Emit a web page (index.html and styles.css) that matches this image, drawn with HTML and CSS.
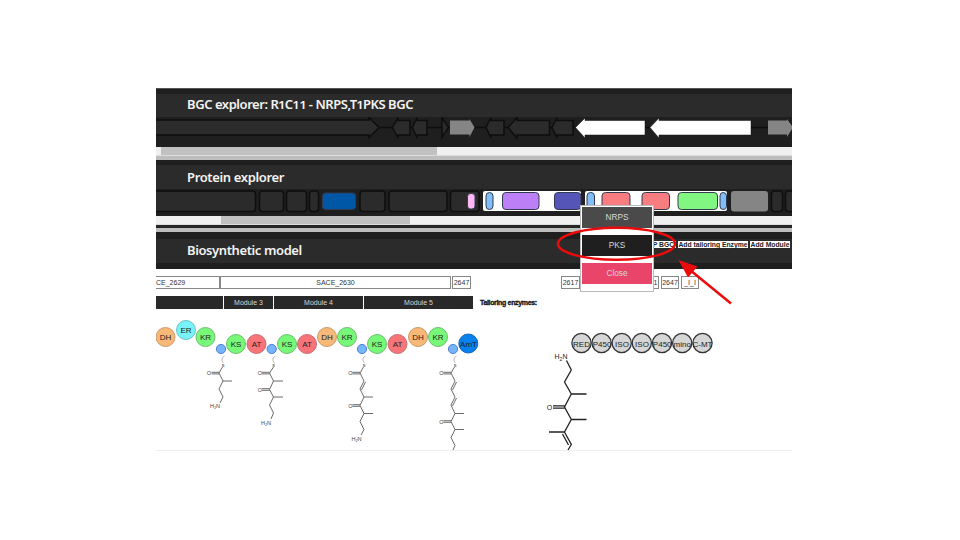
FILE: index.html
```
<!DOCTYPE html>
<html lang="en">
<head>
<meta charset="utf-8">
<title>Biosynthetic model</title>
<link rel="stylesheet" href="styles.css">
</head>
<body>
<main class="app">
  <section class="panel bgc">
    <header class="panel-head"><h2 class="t-bgc">BGC explorer: R<span class="old">1</span>C<span class="old">11</span> - NRPS,T<span class="old">1</span>PKS BGC</h2></header>
    <svg class="track" viewBox="156 117 636 30" width="636" height="30">
      <path class="axis" d="M156 127.500H792"/>
      <g class="gene">
        <path d="M150 120H369V117.500L379 127.500L369 137.500V135H150Z"/>
        <path d="M410 120.500V135H398V138L392.500 127.500L398 117.500V120.500Z"/>
        <path d="M427 120.500V135H417V138L412.500 127.500L417 117.500V120.500Z"/>
        <path d="M442 117.500L448.500 127.500L442 137.500Z"/>
        <path d="M504 120.500V135H491V138L486 127.500L491 117.500V120.500Z"/>
        <path d="M549.500 120.500V135H517V138L508 127.500L517 117.500V120.500Z"/>
        <path d="M573 120.500V135H557V138L552 127.500L557 117.500V120.500Z"/>
      </g>
      <path class="gray" d="M450 120.500H469.500V119L474.500 127.500L469.500 137V134.500H450Z"/>
      <path class="gray" d="M768 120.500H787V119L793 127.500L787 137V134.500H768Z"/>
      <path class="white" d="M645 120.500V135H585V138L575.500 127.500L585 118V120.500Z"/>
      <path class="white" d="M751 120.500V135H659V138L650 127.500L659 118V120.500Z"/>
    </svg>
    <div class="scroll"><i class="thumb thumb-a"></i></div>
  </section>
  <section class="panel protein">
    <header class="panel-head"><h2 class="t-protein">Protein explorer</h2></header>
    <svg class="track" viewBox="156 189 636 27" width="636" height="27">
      <g class="gene">
        <rect x="150" y="191" width="105.500" height="20.500" rx="3"/>
        <rect x="259.500" y="191" width="24" height="20.500" rx="3"/>
        <rect x="286.500" y="191" width="20" height="20.500" rx="3"/>
        <rect x="309.500" y="191" width="9" height="20.500" rx="3"/>
        <rect x="360" y="191" width="25" height="20.500" rx="3"/>
        <rect x="389" y="191" width="58" height="20.500" rx="3"/>
        <rect x="450.500" y="191" width="28.500" height="20.500" rx="3"/>
        <rect x="771.500" y="191" width="11" height="20.500" rx="3"/>
        <rect x="785.500" y="191" width="12" height="20.500" rx="3"/>
      </g>
      <rect x="483" y="191" width="98" height="20" rx="2" fill="#fff"/>
      <rect x="585" y="191" width="142" height="20" rx="2" fill="#fff"/>
      <rect x="731" y="191" width="37" height="20.500" rx="3" fill="#858585"/>
      <g class="domain">
        <rect x="322.500" y="193" width="33" height="16.500" rx="3" fill="#0057a6"/>
        <rect x="467.500" y="193.500" width="7.500" height="15.500" rx="3" fill="#ffb8f5"/>
        <rect x="486" y="192.500" width="7" height="17" rx="3.500" fill="#81bef7"/>
        <rect x="502.500" y="192.500" width="36.500" height="17" rx="3.500" fill="#bc7ff5"/>
        <rect x="554.500" y="192.500" width="26.500" height="17" rx="3.500" fill="#5555b7"/>
        <rect x="587" y="192.500" width="7.500" height="17" rx="3.500" fill="#81bef7"/>
        <rect x="602" y="192.500" width="28" height="17" rx="3.500" fill="#f77d80"/>
        <rect x="642" y="192.500" width="27.500" height="17" rx="3.500" fill="#f77d80"/>
        <rect x="678" y="192.500" width="39.500" height="17" rx="3.500" fill="#81f781"/>
        <rect x="720" y="192.500" width="6.500" height="17" rx="3.300" fill="#81bef7"/>
      </g>
    </svg>
    <div class="scroll"><i class="thumb thumb-b"></i></div>
    <div class="rule"></div>
  </section>
  <section class="panel model">
    <h2 class="t-model">Biosynthetic model</h2>
    <div class="actions"><button class="b-bgc">P BGC</button><button class="b-tail">Add tailoring Enzyme</button><button class="b-mod">Add Module</button></div>
  </section>
  <div class="genes">
    <span class="g-a">CE_2629</span><span class="g-b">SACE_2630</span><span class="g-c">2647</span><span class="g-d">2617</span><span class="g-e">1</span><span class="g-f">2647</span><span class="g-g">_I_I</span>
  </div>
  <div class="modules">
    <span class="m-a"></span><span class="m-b">Module 3</span><span class="m-c">Module 4</span><span class="m-d">Module 5</span><strong>Tailoring enzymes:</strong>
  </div>
  <svg class="canvas" viewBox="156 310 636 141" width="636" height="141">
    <g class="bubbles">
      <g fill="#f8b878" stroke="#c99a6b"><circle cx="165.500" cy="337" r="9.500"/><circle cx="327" cy="337" r="9.500"/><circle cx="418" cy="337" r="9.500"/></g>
      <circle cx="186" cy="330" r="9.500" fill="#78f4f8" stroke="#70bfc4"/>
      <g fill="#78f878" stroke="#6fbd70"><circle cx="205.500" cy="337" r="9.500"/><circle cx="236" cy="344" r="9.500"/><circle cx="287" cy="344" r="9.500"/><circle cx="347" cy="337" r="9.500"/><circle cx="377" cy="344" r="9.500"/><circle cx="438" cy="337" r="9.500"/></g>
      <g fill="#f77479" stroke="#c87075"><circle cx="256.500" cy="344" r="9.500"/><circle cx="307" cy="344" r="9.500"/><circle cx="397.500" cy="344" r="9.500"/></g>
      <circle cx="468.300" cy="343.500" r="9.500" fill="#0781ed" stroke="#1267b5"/>
      <g fill="#76b5fc" stroke="#4f7fd9"><circle cx="221" cy="349" r="4.600"/><circle cx="271.700" cy="349" r="4.600"/><circle cx="362" cy="349" r="4.600"/><circle cx="453" cy="349" r="4.600"/></g>
      <g class="tail"><circle cx="581.500" cy="343" r="9.600"/><circle cx="601.600" cy="343" r="9.600"/><circle cx="621.700" cy="343" r="9.600"/><circle cx="641.800" cy="343" r="9.600"/><circle cx="662" cy="343" r="9.600"/><circle cx="682.200" cy="343" r="9.600"/><circle cx="702.500" cy="343" r="9.600"/></g>
    </g>
    <g class="labels">
      <text x="165.500" y="340">DH</text><text x="186" y="333">ER</text><text x="205.500" y="340">KR</text>
      <text x="236" y="347">KS</text><text x="256.500" y="347">AT</text><text x="287" y="347">KS</text><text x="307" y="347">AT</text>
      <text x="327" y="340">DH</text><text x="347" y="340">KR</text><text x="377" y="347">KS</text><text x="397.500" y="347">AT</text>
      <text x="418" y="340">DH</text><text x="438" y="340">KR</text><text x="468.500" y="347">AmT</text>
      <text x="581.500" y="347">RED</text><text x="602" y="347">P450</text><text x="622" y="347">ISO</text><text x="642" y="347">ISO</text><text x="662.200" y="347">P450</text><text x="682.200" y="347">mino</text><text x="702.500" y="347">C-MT</text>
    </g>
    <g class="mol">
      <path class="link" d="M224.500 356L222 358V361L223.500 363M275.500 356L273 358V361L274.500 363M365.500 356L363 358V361L364.500 363M456.500 356L454 358V361L455.500 363"/>
      <path d="M222.500 367L219 373L223 381L219 389L223 397L220 403M211.500 372.300H219M211.500 373.900H219M223 381H232"/>
      <path d="M273.500 367L269.500 373L273.500 381L269.500 389.500L273.500 397L269.500 405L273.500 413L271 419M262 372.300H269.500M262 373.900H269.500M262 388.700H269.500M262 390.300H269.500M273.500 381H283M273.500 397H283"/>
      <path d="M363.500 367L360 373L364 381L360 389L364 397L360 405.500L364 413.500L360 421.500L364 429.500L361 435M352.500 372.300H360M352.500 373.900H360M352.500 404.700H360M352.500 406.300H360M364 397H373M364 413.500H373M365.500 382L361.500 390"/>
      <path d="M454.500 367L451 373L455 381L451 389L455 397L451 405L455 413.500L451 421.500L455 429.500L451 437.500L455 445.500L453 450M443.500 372.300H451M443.500 373.900H451M443.500 420.700H451M443.500 422.300H451M455 413.500H464M455 429.500H464M456.500 382L452.500 390M456.500 398L452.500 406"/>
      <path class="bold" d="M566.500 360.500L571.300 370L564.500 382L571.300 394L564.500 407L571.300 419.500L564.500 432L571.300 444.500L568 450M553 405.800H564.500M553 408.200H564.500M571.300 394H586.500M571.300 419.500H586.500M564.500 432H549M562.500 434L568.500 445"/>
      <g class="atoms">
        <text x="223" y="367">s</text><text x="273.500" y="367">s</text><text x="364" y="367">s</text><text x="455" y="367">s</text>
        <text x="209" y="375">O</text><text x="260" y="375">O</text><text x="260" y="391.500">O</text><text x="350.500" y="375">O</text><text x="350.500" y="407.500">O</text><text x="441.500" y="375">O</text><text x="441.500" y="423.500">O</text>
        <text x="215" y="408">H<tspan class="sub">2</tspan>N</text><text x="266" y="424.500">H<tspan class="sub">2</tspan>N</text><text x="356.500" y="440.500">H<tspan class="sub">2</tspan>N</text>
      </g>
      <g class="atoms-big"><text x="561" y="359">H<tspan class="sub-big">2</tspan>N</text><text x="549.500" y="409.500">O</text></g>
    </g>
    <path d="M156 451H792" stroke="#ddd"/>
  </svg>
  <div class="menu"><span class="nrps">NRPS</span><span class="pks">PKS</span><span class="close">Close</span></div>
  <svg class="note" viewBox="550 220 190 90" width="190" height="90">
    <ellipse cx="616.500" cy="243.800" rx="58.500" ry="16"/>
    <path d="M731 303.500L690 270"/>
    <path class="tip" d="M678.500 260L697.500 266.500L688 277.500Z"/>
  </svg>
</main>
</body>
</html>
```
FILE: styles.css
```
* { box-sizing: border-box; }
body { margin: 0; background: #fff; font-family: "Liberation Sans", Arial, sans-serif; }
.app { position: relative; width: 636px; margin: 88px 0 0 156px; overflow: hidden; }
.panel { background: #1f1f1f; color: #f3f3f3; }
.panel-head { background: #2b2b2b; padding-left: 31px; }
h2 { margin: 0; font: 600 13px/23px "Noto Sans", "Open Sans", sans-serif; white-space: nowrap; }
.old { display: inline-block; margin: 0 -.4px; transform: scaleY(.77); transform-origin: 50% 73%; }
.bgc { padding-top: 5px; border-bottom: 4px solid #bdbdbd; height: 72px; border-top: 1px solid #555; }
.bgc .panel-head { height: 23px; }
.t-bgc { letter-spacing: -.44px; line-height: 21px; }
.protein { padding-top: 5px; height: 72px; border-bottom: 4px solid #bdbdbd; }
.protein .panel-head { height: 24px; }
.t-protein { letter-spacing: -.36px; line-height: 25px; }
.track { display: block; }
.axis { stroke: #0e0e0e; stroke-width: 1.500; }
.gene > * { fill: #2b2b2b; stroke: #0e0e0e; stroke-width: 1.500; }
.gray { fill: #858585; }
.white { fill: #fff; stroke: #111; stroke-width: .5; }
.domain rect { stroke: #333b50; stroke-width: 1; }
.scroll { height: 9px; background: #f0f0f0; border-bottom: 1px solid #ddd; }
.thumb { display: block; height: 8px; background: #c1c1c1; }
.thumb-a { width: 276px; margin-left: 5px; }
.thumb-b { width: 189px; margin-left: 65px; }
.rule { height: 3px; background: #262626; }
.model { height: 37px; border: solid #1f1f1f; border-width: 7px 0 6px; background: #2b2b2b; padding: 0 2px 0 31px; display: flex; justify-content: space-between; }
.t-model { letter-spacing: -.4px; }
.actions { display: flex; gap: 2px; padding-top: 2px; }
button { height: 7px; padding: 0; border: 0; background: #fff; color: #222; font: bold 6.800px/7px "Liberation Sans", Arial, sans-serif; white-space: nowrap; }
.b-bgc { width: 25px; }
.b-tail { width: 70px; letter-spacing: -.02px; }
.b-mod { width: 40px; }
.genes { display: flex; height: 13px; margin-top: 7px; font-size: 7px; line-height: 11px; color: #333; text-align: center; }
.genes span { border: 1px solid #888; white-space: nowrap; }
.genes .g-a { width: 64px; border-left: 0; text-align: left; }
.genes .g-b { width: 231px; }
.genes .g-c { width: 19px; margin-left: 1px; }
.genes .g-d { width: 19px; margin-left: 90px; }
.genes .g-e { width: 18px; margin-left: 61px; padding-left: 11px; }
.genes .g-f { width: 18px; margin-left: 2px; }
.genes .g-g { width: 18px; margin-left: 2px; }
.modules { display: flex; gap: 1px; height: 13px; margin-top: 7px; margin-bottom: 1px; font-size: 7px; line-height: 13px; text-align: center; color: #d5d5d5; }
.modules span { background: #292929; }
.m-a { width: 67px; }
.m-b { width: 49px; }
.m-c { width: 89px; }
.m-d { width: 109px; }
.modules strong { color: #111; margin-left: 6px; letter-spacing: -.34px; -webkit-text-stroke: .3px #111; }
.canvas { display: block; }
.tail { fill: #d6d6d6; stroke: #333; stroke-width: 1.300; }
.labels { font-size: 8px; text-anchor: middle; fill: #222; }
.mol path { fill: none; stroke: #444; stroke-width: .8; }
.mol .link { stroke: #aaa; }
.mol .bold { stroke: #222; stroke-width: 1.300; }
.atoms { font-size: 5.500px; text-anchor: middle; fill: #444; }
.sub { font-size: 4px; baseline-shift: -1px; }
.atoms-big { font-size: 7px; text-anchor: middle; fill: #222; }
.sub-big { font-size: 5px; baseline-shift: -1.500px; }
.menu { position: absolute; left: 424px; top: 117px; width: 74px; height: 87px; padding: 1px; border: 1px solid #bbb; background: #fff; display: flex; flex-direction: column; gap: 7px; font-size: 8.300px; line-height: 21px; text-align: center; color: #d8d8d8; }
.menu span { height: 21px; }
.nrps { background: #4a4a4a; }
.pks { background: #1f1f1f; }
.close { background: #e9456a; }
.note { position: absolute; left: 394px; top: 132px; fill: none; stroke: #ea0c0c; stroke-width: 2.500; }
.note .tip { fill: #ea0c0c; stroke: none; }
```
